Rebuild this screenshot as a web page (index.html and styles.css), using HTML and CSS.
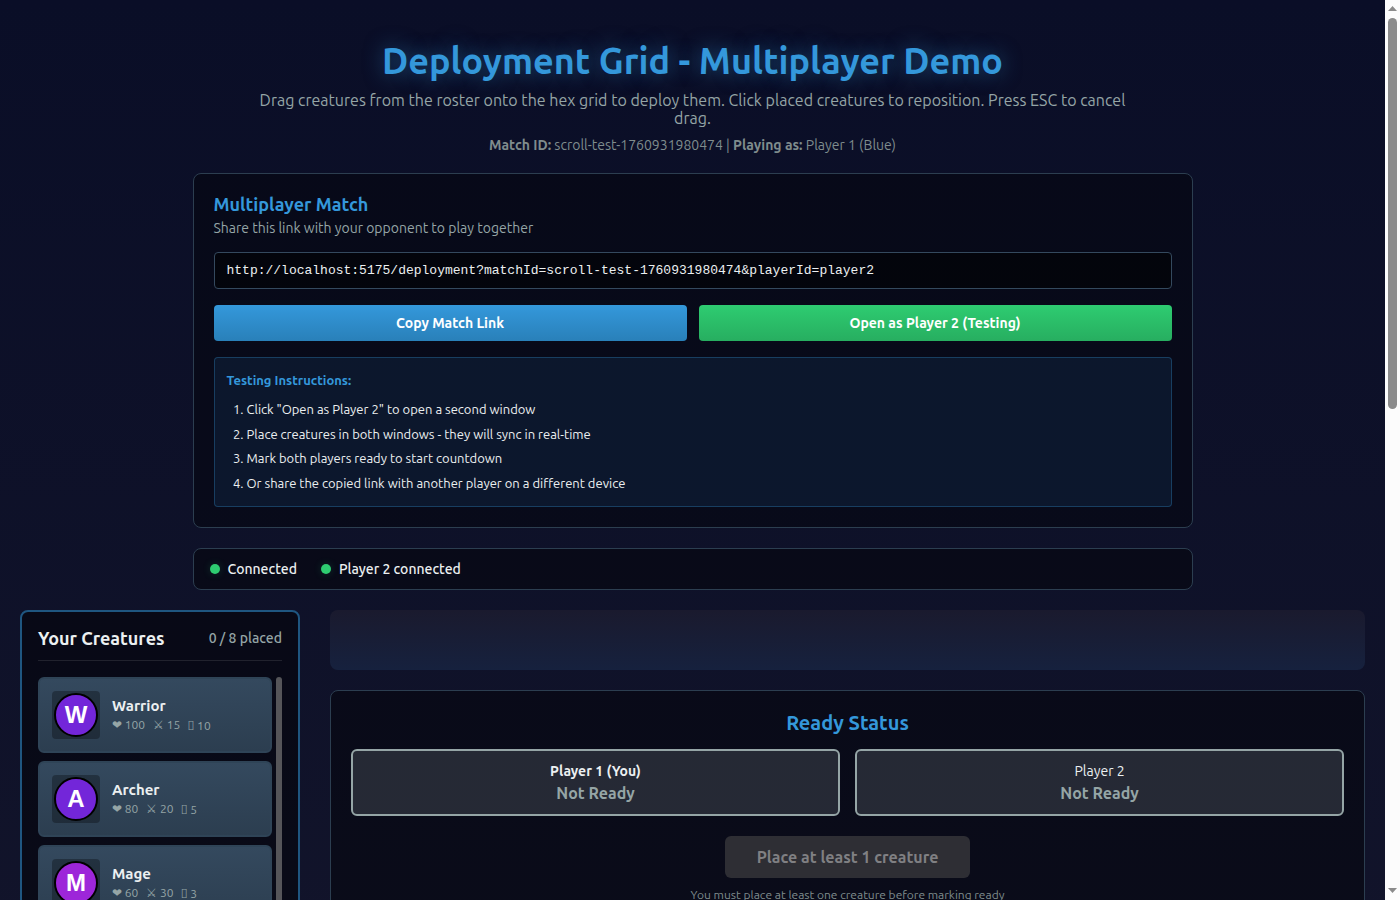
FILE: index.html
```
<!DOCTYPE html>
<html lang="en">
<head>
<meta charset="utf-8">
<title>Deployment Grid - Multiplayer Demo</title>
<link rel="stylesheet" href="styles.css">
</head>
<body>
<div class="viewport">
  <div class="page">
    <header class="header">
      <h1 class="title">Deployment Grid - Multiplayer Demo</h1>
      <p class="description">Drag creatures from the roster onto the hex grid to deploy them. Click placed creatures to reposition. Press ESC to cancel drag.</p>
      <div class="match-info"><strong>Match ID:</strong> scroll-test-1760931980474 | <strong>Playing as:</strong> Player 1 (Blue)</div>
    </header>

    <section class="panel match">
      <h3 class="match-title">Multiplayer Match</h3>
      <p class="match-subtitle">Share this link with your opponent to play together</p>
      <div class="link-box">http://localhost:5175/deployment?matchId=scroll-test-1760931980474&amp;playerId=player2</div>
      <div class="match-actions">
        <button class="btn btn-blue">Copy Match Link</button>
        <button class="btn btn-green">Open as Player 2 (Testing)</button>
      </div>
      <div class="instructions">
        <strong class="instructions-title">Testing Instructions:</strong>
        <ol class="steps">
          <li>Click "Open as Player 2" to open a second window</li>
          <li>Place creatures in both windows - they will sync in real-time</li>
          <li>Mark both players ready to start countdown</li>
          <li>Or share the copied link with another player on a different device</li>
        </ol>
      </div>
    </section>

    <section class="panel status-bar">
      <div class="status"><span class="dot"></span>Connected</div>
      <div class="status"><span class="dot"></span>Player 2 connected</div>
    </section>

    <main class="board">
      <aside class="roster">
        <div class="roster-header">
          <h3 class="roster-title">Your Creatures</h3>
          <span class="roster-count">0 / 8 placed</span>
        </div>
        <div class="roster-scroll">
          <div class="roster-list">
            <div class="card">
              <div class="avatar"><div class="token">W</div></div>
              <div>
                <div class="name">Warrior</div>
                <div class="stats"><span>❤ 100</span><span>⚔ 15</span><span class="stat-low">&#xE0B8; 10</span></div>
              </div>
            </div>
            <div class="card">
              <div class="avatar"><div class="token">A</div></div>
              <div>
                <div class="name">Archer</div>
                <div class="stats"><span>❤ 80</span><span>⚔ 20</span><span class="stat-low">&#xE0B8; 5</span></div>
              </div>
            </div>
            <div class="card">
              <div class="avatar"><div class="token token-magenta">M</div></div>
              <div>
                <div class="name">Mage</div>
                <div class="stats"><span>❤ 60</span><span>⚔ 30</span><span class="stat-low">&#xE0B8; 3</span></div>
              </div>
            </div>
          </div>
          <div class="roster-thumb"></div>
        </div>
      </aside>

      <div class="field">
        <div class="hex-grid"></div>
        <section class="panel ready">
          <h3 class="ready-title">Ready Status</h3>
          <div class="players">
            <div class="player">
              <div class="player-name player-you">Player 1 (You)</div>
              <div class="player-state">Not Ready</div>
            </div>
            <div class="player">
              <div class="player-name">Player 2</div>
              <div class="player-state">Not Ready</div>
            </div>
          </div>
          <button class="ready-btn">Place at least 1 creature</button>
          <p class="ready-hint">You must place at least one creature before marking ready</p>
        </section>
      </div>
    </main>
  </div>

  <div class="scrollbar">
    <svg width="15" height="18" viewBox="0 0 15 18"><path d="M3 11h9L7.500 6z" fill="#8b8b8b"/></svg>
    <div class="scroll-thumb"></div>
    <svg class="scroll-down" width="15" height="18" viewBox="0 0 15 18"><path d="M3 6h9L7.500 11z" fill="#8b8b8b"/></svg>
  </div>
</div>
</body>
</html>
```
FILE: styles.css
```
* { box-sizing: border-box; margin: 0; padding: 0; }

body {
  font-family: Ubuntu, "Noto Sans", sans-serif;
  color: #ecf0f1;
  height: 900px;
  overflow: hidden;
  background: #0a0e27;
}

.viewport { display: flex; height: 900px; overflow: hidden; }

.page {
  flex: 1;
  min-width: 0;
  height: 1990px;
  padding: 20px;
  background: linear-gradient(180deg, #0a0e27 0%, #1a1a2e 100%);
}

.header { padding-top: 20px; text-align: center; margin-bottom: 20px; }
.title {
  font-size: 36px;
  font-weight: 600;
  color: #3498db;
  text-shadow: 0 0 20px rgba(52, 152, 219, 0.5);
  margin-bottom: 10px;
}
.description { max-width: 900px; margin: 0 auto 10px; font-size: 16px; color: #95a5a6; }
.match-info { font-size: 14px; color: #7f8c8d; }

.panel {
  background: rgba(0, 0, 0, 0.4);
  border: 1px solid #2c3e50;
  border-radius: 8px;
}

.match { max-width: 1000px; margin: 0 auto 20px; padding: 20px; background: rgba(0, 0, 0, 0.36); }
.match-title { font-size: 18px; font-weight: 600; color: #3498db; margin-bottom: 6px; }
.match-subtitle { font-size: 14px; color: #95a5a6; margin-bottom: 16px; }
.link-box {
  padding: 10px 12px;
  font: 13px/15px "Liberation Mono", monospace;
  background: rgba(0, 0, 0, 0.5);
  border: 1px solid #34495e;
  border-radius: 4px;
  margin-bottom: 16px;
}
.match-actions { display: flex; gap: 12px; margin-bottom: 16px; }
.btn {
  flex: 1;
  padding: 10px 16px;
  font: 600 14px/16px Ubuntu, "Noto Sans", sans-serif;
  color: #fff;
  border: none;
  border-radius: 4px;
}
.btn-blue { background: linear-gradient(180deg, #3498db, #2980b9); }
.btn-green { background: linear-gradient(180deg, #2ecc71, #27ae60); }

.instructions {
  padding: 12px;
  font-size: 13px;
  line-height: 1.6;
  background: rgba(52, 152, 219, 0.1);
  border: 1px solid rgba(52, 152, 219, 0.3);
  border-radius: 4px;
}
.instructions-title { display: block; color: #3498db; margin-bottom: 8px; }
.steps { padding-left: 20px; }
.steps li + li { margin-top: 4px; }

.status-bar {
  display: flex;
  gap: 24px;
  max-width: 1000px;
  margin: 0 auto 20px;
  padding: 12px 16px;
}
.status { display: flex; align-items: center; gap: 8px; font-size: 14px; font-weight: 500; }
.dot {
  width: 10px;
  height: 10px;
  border-radius: 50%;
  background: #2ecc71;
  box-shadow: 0 0 8px rgba(46, 204, 113, 0.2);
}

.board { display: flex; align-items: flex-start; gap: 30px; }

.roster {
  width: 280px;
  height: 600px;
  flex: none;
  padding: 16px;
  background: rgba(0, 0, 0, 0.45);
  border: 2px solid #1f5680;
  border-radius: 8px;
}
.roster-header {
  display: flex;
  justify-content: space-between;
  align-items: center;
  padding-bottom: 12px;
  border-bottom: 1px solid rgba(255, 255, 255, 0.1);
  margin-bottom: 16px;
}
.roster-title { font-size: 18px; font-weight: 600; }
.roster-count { font-size: 14px; font-weight: 500; color: #95a5a6; }
.roster-scroll { display: flex; gap: 4px; height: 500px; }
.roster-list { flex: 1; display: flex; flex-direction: column; gap: 8px; }
.roster-thumb { width: 6px; height: 400px; border-radius: 3px; background: #555559; }

.card {
  display: flex;
  align-items: center;
  gap: 12px;
  height: 76px;
  padding: 12px;
  background: linear-gradient(180deg, #34495e, #2c3e50);
  border: 2px solid #2f4457;
  border-radius: 6px;
}
.avatar {
  display: flex;
  align-items: center;
  justify-content: center;
  width: 48px;
  height: 48px;
  background: rgba(0, 0, 0, 0.3);
  border-radius: 4px;
}
.token {
  width: 44px;
  height: 44px;
  border: 2px solid #000;
  border-radius: 50%;
  background: #7326d9;
  color: #fff;
  font: bold 24px/40px "Liberation Sans", Arial, sans-serif;
  text-align: center;
}
.token-magenta { background: #9d26d9; }
.name { font-size: 15px; font-weight: 600; margin-bottom: 4px; }
.stats { display: flex; gap: 8px; height: 15px; font-size: 12px; color: #95a5a6; }
.stat-low { margin-top: 1px; }

.field { flex: 1; min-width: 0; }
.hex-grid {
  height: 60px;
  margin-bottom: 20px;
  border-radius: 8px;
  background: linear-gradient(180deg, #1a1a2e, #16213e);
}
.ready { height: 300px; padding: 20px; text-align: center; }
.ready-title { font-size: 20px; font-weight: 600; color: #3498db; margin-bottom: 15px; }
.players { display: flex; gap: 15px; margin-bottom: 20px; }
.player {
  flex: 1;
  padding: 12px;
  background: rgba(149, 165, 166, 0.2);
  border: 2px solid #95a5a6;
  border-radius: 6px;
}
.player-name { font-size: 14px; margin-bottom: 5px; }
.player-you { font-weight: 600; }
.player-state { font-size: 16px; font-weight: 600; color: #95a5a6; }
.ready-btn {
  padding: 12px 32px;
  font: 600 16px/18px Ubuntu, "Noto Sans", sans-serif;
  color: #808083;
  background: #2e2e34;
  border: none;
  border-radius: 6px;
}
.ready-hint { margin-top: 10px; font-size: 12px; color: #7f8c8d; }

.scrollbar {
  display: flex;
  flex-direction: column;
  align-items: center;
  width: 15px;
  height: 900px;
  background: #fcfcfc;
}
.scroll-thumb { width: 9px; height: 391px; border-radius: 5px; background: #8b8b8b; }
.scroll-down { margin-top: auto; }
```
